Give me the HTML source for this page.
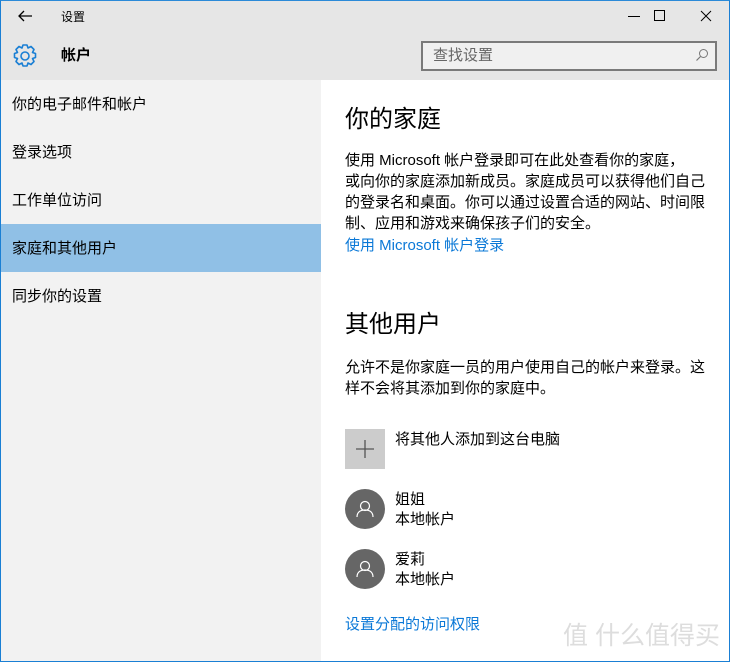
<!DOCTYPE html>
<html><head><meta charset="utf-8"><style>
*{margin:0;padding:0;box-sizing:border-box}
body{width:730px;height:662px;overflow:hidden;background:#fff;font-family:"Liberation Sans","Noto Sans CJK SC",sans-serif;color:#000;position:relative}
.frame{position:absolute;left:0;top:0;width:730px;height:662px;border:1px solid #1a7fd4;border-top-color:#2b8ad8;pointer-events:none;z-index:10}
.hdr{position:absolute;left:0;top:0;width:730px;height:80px;background:#e6e6e6}
.side{position:absolute;left:0;top:80px;width:321px;height:582px;background:#f2f2f2}
.t{position:absolute;white-space:nowrap;font-size:15px;line-height:20px;margin-top:1px}
.item{position:absolute;left:0;width:321px;height:48px;font-size:15px;line-height:50px;padding-left:12px}
.sel{background:#90c0e6}
.h{position:absolute;font-size:24px;line-height:30px;color:#000;white-space:nowrap}
.link{color:#0a78d7}
.av{position:absolute;left:345px;width:40px;height:40px;border-radius:50%;background:#666}
</style></head><body>
<div class="hdr"></div>
<div class="side">
<div class="item" style="top:0">你的电子邮件和帐户</div>
<div class="item" style="top:48px">登录选项</div>
<div class="item" style="top:96px">工作单位访问</div>
<div class="item sel" style="top:144px">家庭和其他用户</div>
<div class="item" style="top:192px">同步你的设置</div>
</div>
<svg style="position:absolute;left:17px;top:8px" width="16" height="16" viewBox="0 0 16 16"><path d="M15 8H2M7 3L2 8l5 5" fill="none" stroke="#000" stroke-width="1.3"/></svg>
<div class="t" style="left:61px;top:6px;font-size:12px">设置</div>
<svg style="position:absolute;left:626px;top:8px" width="16" height="16"><path d="M2 8.5h12" stroke="#000" stroke-width="1"/></svg>
<svg style="position:absolute;left:652px;top:8px" width="16" height="16"><rect x="2.5" y="2.5" width="10" height="10" fill="none" stroke="#000" stroke-width="1"/></svg>
<svg style="position:absolute;left:698px;top:8px" width="16" height="16"><path d="M3 3l10 10M13 3L3 13" stroke="#000" stroke-width="1"/></svg>
<svg style="position:absolute;left:12px;top:43px" width="26" height="26" viewBox="-13 -13 26 26"><path d="M-2-11h4l1 3 3-1.5 3 3-1.5 3 3 1v4l-3 1 1.5 3-3 3-3-1.5-1 3h-4l-1-3-3 1.5-3-3 1.5-3-3-1v-4l3-1-1.5-3 3-3 3 1.5z" fill="none" stroke="#1a7fd4" stroke-width="1.6" stroke-linejoin="round"/><circle r="4" fill="none" stroke="#1a7fd4" stroke-width="1.6"/></svg>
<div class="t" style="left:61px;top:45px;font-size:15px;font-weight:bold">帐户</div>
<div style="position:absolute;left:421px;top:41px;width:296px;height:30px;border:2px solid #7a7a7a;background:#f0f0f0"></div>
<div class="t" style="left:433px;top:45px;color:#666">查找设置</div>
<svg style="position:absolute;left:695px;top:48px" width="14" height="14"><circle cx="8.5" cy="5.5" r="4" fill="none" stroke="#777" stroke-width="1"/><path d="M5.5 8.5L1.5 12.5" stroke="#777" stroke-width="1.2"/></svg>

<div class="h" style="left:345px;top:105px">你的家庭</div>
<div class="t" style="left:345px;top:150px">使用 Microsoft 帐户登录即可在此处查看你的家庭，</div>
<div class="t" style="left:345px;top:171px">或向你的家庭添加新成员。家庭成员可以获得他们自己</div>
<div class="t" style="left:345px;top:192px">的登录名和桌面。你可以通过设置合适的网站、时间限</div>
<div class="t" style="left:345px;top:213px">制、应用和游戏来确保孩子们的安全。</div>
<div class="t link" style="left:345px;top:235px">使用 Microsoft 帐户登录</div>

<div class="h" style="left:345px;top:310px">其他用户</div>
<div class="t" style="left:345px;top:357px">允许不是你家庭一员的用户使用自己的帐户来登录。这</div>
<div class="t" style="left:345px;top:378px">样不会将其添加到你的家庭中。</div>

<div style="position:absolute;left:345px;top:429px;width:40px;height:40px;background:#ccc"></div>
<svg style="position:absolute;left:345px;top:429px" width="40" height="40"><path d="M20 11v18M11 20h18" stroke="#555" stroke-width="1.3"/></svg>
<div class="t" style="left:395px;top:429px">将其他人添加到这台电脑</div>

<div class="av" style="top:489px"></div>
<svg style="position:absolute;left:345px;top:489px" width="40" height="40"><circle cx="20" cy="17" r="4.5" fill="none" stroke="#fff" stroke-width="1.2"/><path d="M12 28c0-5 3.5-7 8-7s8 2 8 7" fill="none" stroke="#fff" stroke-width="1.2"/></svg>
<div class="t" style="left:395px;top:489px">姐姐</div>
<div class="t" style="left:395px;top:509px">本地帐户</div>

<div class="av" style="top:549px"></div>
<svg style="position:absolute;left:345px;top:549px" width="40" height="40"><circle cx="20" cy="17" r="4.5" fill="none" stroke="#fff" stroke-width="1.2"/><path d="M12 28c0-5 3.5-7 8-7s8 2 8 7" fill="none" stroke="#fff" stroke-width="1.2"/></svg>
<div class="t" style="left:395px;top:549px">爱莉</div>
<div class="t" style="left:395px;top:569px">本地帐户</div>

<div class="t link" style="left:345px;top:614px">设置分配的访问权限</div>
<div class="t" style="left:563px;top:619px;font-size:25px;line-height:32px;color:#ddd">值 什么值得买</div>
<div class="frame"></div>
</body></html>
